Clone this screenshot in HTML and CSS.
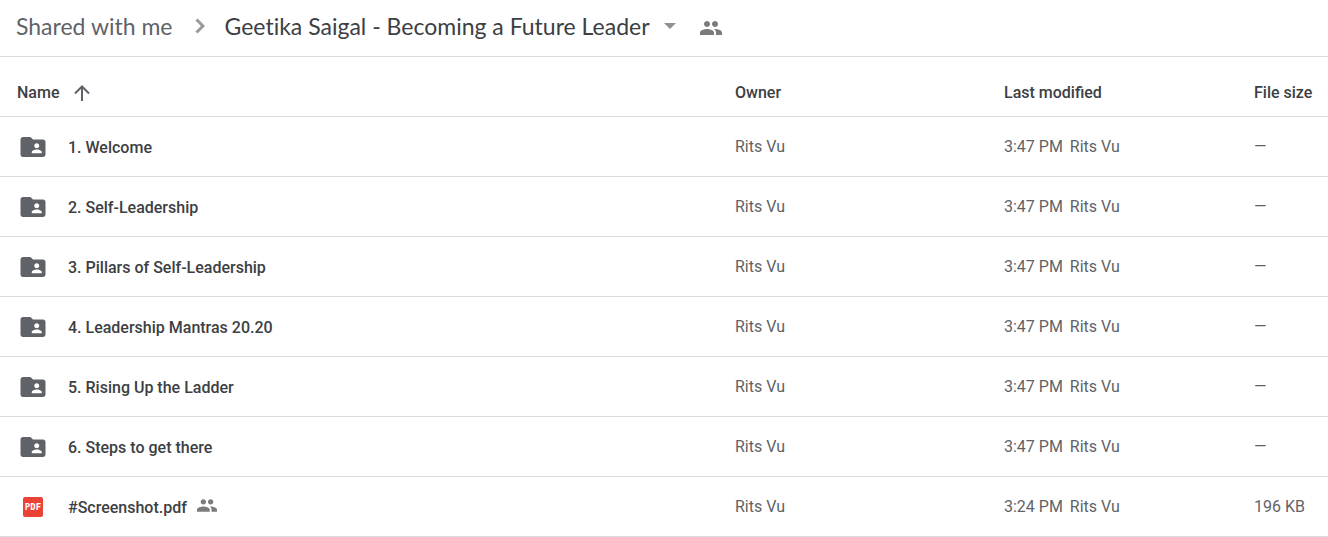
FILE: index.html
```html
<!DOCTYPE html>
<html lang="en">
<head>
  <meta charset="UTF-8" />
  <meta name="viewport" content="width=device-width, initial-scale=1.0" />
  <title>Geetika Saigal - Becoming a Future Leader</title>
  <link rel="stylesheet" href="styles.css">
</head>
<body>
  <svg class="sprite" aria-hidden="true">
    <symbol id="folder" viewBox="0 0 24 24">
      <path d="M20 6h-8l-2-2H4c-1.100 0-1.990.9-1.990 2L2 18c0 1.100.9 2 2 2h16c1.100 0 2-.9 2-2V8c0-1.100-.9-2-2-2zm-5 3c1.100 0 2 .9 2 2s-.9 2-2 2-2-.9-2-2 .9-2 2-2zm4 8h-8v-1c0-1.330 2.670-2 4-2s4 .67 4 2v1z"/>
    </symbol>
    <symbol id="people" viewBox="1 5 22 14">
      <path d="M16 11c1.660 0 2.990-1.340 2.990-3S17.660 5 16 5s-3 1.340-3 3 1.340 3 3 3zm-8 0c1.660 0 2.990-1.340 2.990-3S9.660 5 8 5 5 6.340 5 8s1.340 3 3 3zm0 2c-2.330 0-7 1.170-7 3.500V19h14v-2.500c0-2.330-4.670-3.500-7-3.500zm8 0c-.29 0-.62.02-.97.05 1.160.84 1.970 1.970 1.970 3.450V19h6v-2.500c0-2.330-4.670-3.500-7-3.500z"/>
    </symbol>
  </svg>

  <nav class="breadcrumb" aria-label="Breadcrumb">
    <a href="#" class="crumb">Shared with me</a>
    <svg class="chevron" viewBox="0 0 10 16" aria-hidden="true"><path d="M1.500 1.500 8 8l-6.500 6.500"/></svg>
    <button type="button" class="crumb current">
      Geetika Saigal - Becoming a Future Leader
      <svg class="caret" viewBox="0 0 12 6" aria-hidden="true"><path d="M0 0h12L6 6z"/></svg>
    </button>
    <button type="button" class="share" aria-label="Shared">
      <svg class="people" aria-hidden="true"><use href="#people"/></svg>
    </button>
  </nav>

  <table class="files">
    <thead>
      <tr>
        <th class="name">
          <button type="button" class="sort">
            Name
            <svg class="arrow" viewBox="0 0 16 16" aria-hidden="true"><path d="M8 16V2M1 8.500 8 1.500l7 7"/></svg>
          </button>
        </th>
        <th class="owner">Owner</th>
        <th class="modified">Last modified</th>
        <th class="size">File size</th>
      </tr>
    </thead>
    <tbody>
      <tr>
        <td><div class="file"><svg class="icon" aria-hidden="true"><use href="#folder"/></svg><span class="title">1. Welcome</span></div></td>
        <td>Rits Vu</td>
        <td>3:47 PM <span class="by">Rits Vu</span></td>
        <td>—</td>
      </tr>
      <tr>
        <td><div class="file"><svg class="icon" aria-hidden="true"><use href="#folder"/></svg><span class="title">2. Self-Leadership</span></div></td>
        <td>Rits Vu</td>
        <td>3:47 PM <span class="by">Rits Vu</span></td>
        <td>—</td>
      </tr>
      <tr>
        <td><div class="file"><svg class="icon" aria-hidden="true"><use href="#folder"/></svg><span class="title">3. Pillars of Self-Leadership</span></div></td>
        <td>Rits Vu</td>
        <td>3:47 PM <span class="by">Rits Vu</span></td>
        <td>—</td>
      </tr>
      <tr>
        <td><div class="file"><svg class="icon" aria-hidden="true"><use href="#folder"/></svg><span class="title">4. Leadership Mantras 20.20</span></div></td>
        <td>Rits Vu</td>
        <td>3:47 PM <span class="by">Rits Vu</span></td>
        <td>—</td>
      </tr>
      <tr>
        <td><div class="file"><svg class="icon" aria-hidden="true"><use href="#folder"/></svg><span class="title">5. Rising Up the Ladder</span></div></td>
        <td>Rits Vu</td>
        <td>3:47 PM <span class="by">Rits Vu</span></td>
        <td>—</td>
      </tr>
      <tr>
        <td><div class="file"><svg class="icon" aria-hidden="true"><use href="#folder"/></svg><span class="title">6. Steps to get there</span></div></td>
        <td>Rits Vu</td>
        <td>3:47 PM <span class="by">Rits Vu</span></td>
        <td>—</td>
      </tr>
      <tr>
        <td>
          <div class="file">
            <span class="icon pdf">PDF</span>
            <span class="title">#Screenshot.pdf</span>
            <svg class="people small" aria-hidden="true"><use href="#people"/></svg>
          </div>
        </td>
        <td>Rits Vu</td>
        <td>3:24 PM <span class="by">Rits Vu</span></td>
        <td>196 KB</td>
      </tr>
    </tbody>
  </table>
</body>
</html>
```

FILE: styles.css
```css
:root {
  --text: #3c4043;
  --muted: #5f6368;
  --line: #dadce0;
}

body {
  margin: 0;
  background: #fff;
  color: var(--text);
  font-family: Roboto, sans-serif;
  font-size: 16px;
  line-height: 20px;
}

button {
  padding: 0;
  border: 0;
  background: none;
  color: inherit;
  font: inherit;
  cursor: pointer;
}

.sprite {
  display: none;
}

.breadcrumb {
  display: flex;
  align-items: center;
  padding: 10px 16px 14px;
  border-bottom: 1px solid var(--line);
}

.crumb {
  color: var(--muted);
  font-family: Lato, sans-serif;
  font-size: 23px;
  font-variant-ligatures: none;
  line-height: 32px;
  text-decoration: none;
  white-space: nowrap;
}

.chevron {
  width: 10px;
  height: 16px;
  margin: 0 20px 0 22px;
  fill: none;
  stroke: #98999c;
  stroke-width: 3;
}

.current {
  display: flex;
  align-items: center;
  gap: 14px;
  color: var(--text);
}

.caret {
  width: 12px;
  height: 6px;
  fill: #919191;
}

.share {
  display: flex;
  margin-left: 24px;
  padding-top: 4px;
}

.people {
  width: 22px;
  height: 14px;
  fill: #7b7b7b;
}

.people.small {
  width: 20px;
  height: 13px;
  margin: 0 0 3px 10px;
}

.files {
  width: 100%;
  table-layout: fixed;
  border-collapse: separate;
  border-spacing: 0;
}

.files th,
.files td {
  height: 59px;
  padding: 0;
  border-bottom: 1px solid var(--line);
  text-align: left;
  white-space: nowrap;
}

.files th {
  padding-top: 12px;
  height: 47px;
  font-weight: 500;
}

.files td {
  color: var(--muted);
}

.owner {
  width: 269px;
}

.modified {
  width: 250px;
}

.size {
  width: 74px;
}

.sort {
  display: flex;
  align-items: center;
  gap: 15px;
  padding-left: 17px;
}

.arrow {
  width: 16px;
  height: 16px;
  fill: none;
  stroke: var(--muted);
  stroke-width: 2;
}

.file {
  display: flex;
  align-items: center;
  padding: 1px 0 0 18px;
  color: var(--text);
  font-weight: 500;
}

.title {
  padding-top: 2px;
}

.icon {
  width: 30px;
  height: 30px;
  margin-right: 20px;
  fill: var(--muted);
}

.pdf {
  width: 20px;
  height: 20px;
  margin: 0 25px 0 5px;
  border-radius: 2px;
  background: #ea4335;
  color: #fff;
  font-family: "DejaVu Sans Mono", monospace;
  font-size: 9px;
  font-weight: 700;
  line-height: 20px;
  text-align: center;
}

.by {
  margin-left: 3px;
}
```
